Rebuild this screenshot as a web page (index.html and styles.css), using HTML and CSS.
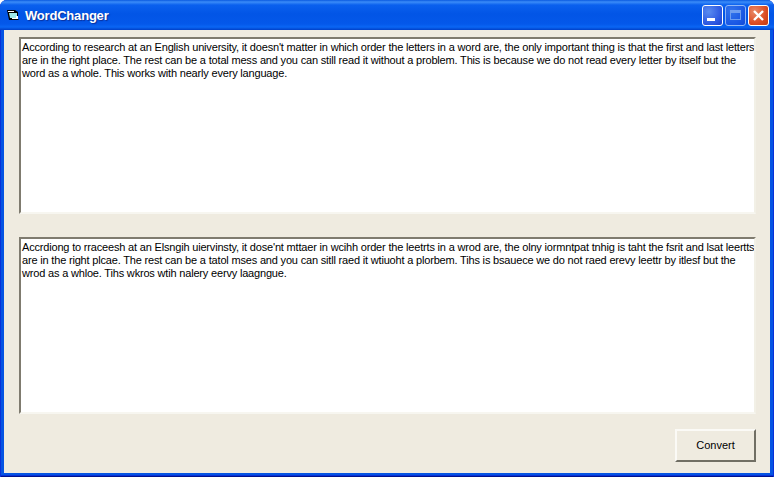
FILE: index.html
```html
<!DOCTYPE html>
<html lang="en">
<head>
    <meta charset="UTF-8">
    <title>WordChanger</title>
    <link rel="stylesheet" href="styles.css">
</head>
<body>
    <div class="window">
        <div class="titlebar">
            <svg class="app-icon" width="16" height="16" viewBox="0 0 16 16">
                <path d="M2 3h8l3 2v7l1 1H4z" fill="#000"/>
                <path d="M3 4h6v1H3z" fill="#fff"/>
                <path d="M4 6h8v5H5z" fill="#9fe8e8"/>
                <path d="M11 9h2v3H7v-1h4z" fill="#fff"/>
            </svg>
            <span class="title">WordChanger</span>
            <div class="controls">
                <div class="ctl ctl-min"><span class="min-glyph"></span></div>
                <div class="ctl ctl-max"><span class="max-glyph"></span></div>
                <div class="ctl ctl-close">
                    <svg width="13" height="13" viewBox="0 0 13 13">
                        <path d="M2 2l9 9M11 2l-9 9" stroke="#fff" stroke-width="2.4" fill="none"/>
                    </svg>
                </div>
            </div>
        </div>
        <div class="client">
            <div class="textbox">According to research at an English university, it doesn't matter in which order the letters in a word are, the only important thing is that the first and last letters<br>are in the right place. The rest can be a total mess and you can still read it without a problem. This is because we do not read every letter by itself but the<br>word as a whole. This works with nearly every language.</div>
            <div class="textbox">Accrdiong to rraceesh at an Elsngih uiervinsty, it dose'nt mttaer in wcihh order the leetrts in a wrod are, the olny iormntpat tnhig is taht the fsrit and lsat leertts<br>are in the right plcae. The rest can be a tatol mses and you can sitll raed it wtiuoht a plorbem. Tihs is bsauece we do not raed erevy leettr by itlesf but the<br>wrod as a whloe. Tihs wkros wtih nalery eervy laagngue.</div>
            <div class="actions">
                <button class="btn" type="button">Convert</button>
            </div>
        </div>
    </div>
</body>
</html>
```

FILE: styles.css
```css
html, body {
    margin: 0;
    padding: 0;
}
body {
    width: 774px;
    height: 477px;
    overflow: hidden;
    font-family: "Liberation Sans", Arial, sans-serif;
    font-size: 11px;
}
.window {
    width: 774px;
    height: 477px;
    box-sizing: border-box;
    display: flex;
    flex-direction: column;
    background: #0554e3;
    border-radius: 7px 7px 0 0;
    box-shadow: inset 1px 0 #0831d9, inset -1px 0 #0831d9, inset 0 -1px #00138c, inset 0 -2px #0831d9;
}
.titlebar {
    height: 30px;
    flex: none;
    display: flex;
    align-items: center;
    padding: 0 5px 0 5px;
    border-radius: 7px 7px 0 0;
    background: linear-gradient(to bottom, #0a5ae0 0, #3b8cf8 2px, #0a60ee 5px, #0255e6 14px, #0458ea 24px, #0a66f4 27px, #0040c8 30px);
}
.app-icon {
    flex: none;
    margin-right: 4px;
}
.title {
    flex: 1;
    color: #fff;
    font-weight: 700;
    font-size: 13px;
    letter-spacing: -0.2px;
    text-shadow: 1px 1px 1px #0b2f9a;
}
.controls {
    display: flex;
    gap: 2px;
}
.ctl {
    width: 21px;
    height: 21px;
    box-sizing: border-box;
    border: 1px solid #fff;
    border-radius: 3px;
    display: flex;
    align-items: center;
    justify-content: center;
    background: radial-gradient(circle at 30% 30%, #5a8cf0, #2a55e0 70%, #1c3fc8);
}
.ctl-max {
    opacity: 0.55;
}
.ctl-close {
    background: radial-gradient(circle at 30% 30%, #e98a68, #dc4d24 60%, #c23a12);
}
.min-glyph {
    width: 8px;
    height: 3px;
    background: #fff;
    margin: 9px 4px 0 0;
}
.max-glyph {
    width: 11px;
    height: 10px;
    box-sizing: border-box;
    border: 1px solid #c8d8f8;
    border-top-width: 3px;
}
.client {
    flex: 1;
    margin: 0 4px 4px 4px;
    padding: 7px 15px 11px 15px;
    background: #efebe0;
    display: flex;
    flex-direction: column;
    gap: 23px;
}
.textbox {
    height: 177px;
    box-sizing: border-box;
    width: 737px;
    background: #fff;
    color: #000;
    padding: 2px 0 0 1px;
    line-height: 13px;
    letter-spacing: -0.18px;
    white-space: nowrap;
    overflow: hidden;
    border: 2px solid;
    border-color: #7f7b6f #f2f0e6 #f7f6f0 #7f7b6f;
}
.actions {
    display: flex;
    justify-content: flex-end;
    margin-top: -8px;
}
.btn {
    width: 81px;
    height: 33px;
    margin-right: -1px;
    padding: 0 0 2px 0;
    background: #efebe0;
    color: #000;
    font-family: "Liberation Sans", Arial, sans-serif;
    font-size: 11px;
    border: 2px solid;
    border-color: #fbfaf6 #716f64 #716f64 #fbfaf6;
}
```
